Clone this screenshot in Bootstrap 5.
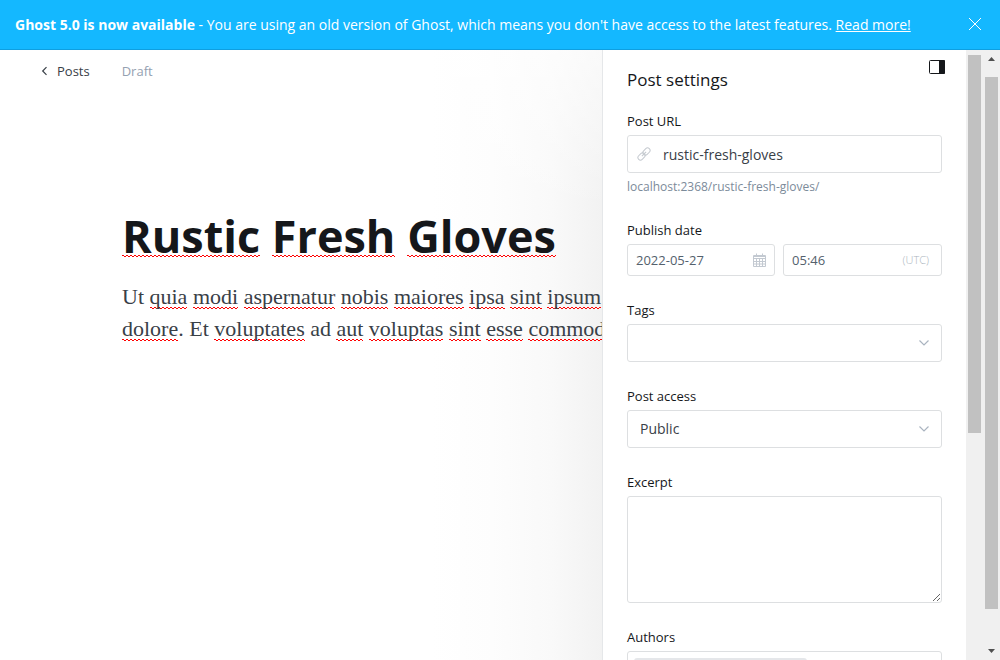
<!DOCTYPE html>
<html lang="en">
<head>
<meta charset="utf-8">
<meta name="viewport" content="width=device-width, initial-scale=1">
<title>Rustic Fresh Gloves</title>
<link href="https://cdn.jsdelivr.net/npm/bootstrap@5.3.0/dist/css/bootstrap.min.css" rel="stylesheet">
<style>
  body { font-family: "Open Sans", "Noto Sans", sans-serif; font-size: 13px; line-height: 20px; color: #15171a; }
  .notice { background: #14b8ff; border-bottom: 1px solid #0f9fe0; padding: 15px 16px 14px 15px; font-size: 14px; }
  .notice a, .notice button { color: #fff; }
  .editor { background: linear-gradient(to bottom, rgba(255,255,255,.6), rgba(255,255,255,0) 160px), linear-gradient(to left, #f2f2f2 0, #f9f9f9 50px, #fdfdfd 110px, #fff 170px); min-width: 0; }
  .topbar { padding: 11px 40px; gap: 32px; }
  .back { color: #394047; font-weight: 500; }
  .draft { color: #95a1b1; }
  .post-body { padding: 116px 0 0 122px; }
  .post-title { font-size: 45px; line-height: 56px; font-weight: 700; margin-bottom: 17px; }
  .post-text { font-family: "Liberation Serif", serif; font-size: 22px; line-height: 32px; color: #394047; }
  .typo { background: url("data:image/svg+xml,%3Csvg xmlns='http://www.w3.org/2000/svg' width='4' height='3'%3E%3Cpath d='M-1 3 1 1 3 3 5 1' fill='none' stroke='%23f00'/%3E%3C/svg%3E") repeat-x left bottom; }
  .post-title .typo { background-position: left 0 bottom 9px; }
  .settings { width: 364px; border-left: 1px solid #e5e7e9; padding: 7px 24px 0; }
  .settings h2 { font-size: 17px; line-height: 24px; font-weight: 500; margin: 11px 0 0; }
  .panel-head { margin: 0 -5px 19px 0; }
  .field { margin-bottom: 24px; }
  .field label, .field-name { display: block; font-size: 13px; line-height: 20px; font-weight: 500; margin-bottom: 4px; }
  .form-control, .form-select { border-color: #dddfe1; border-radius: 3px; font-size: 14px; line-height: 20px; color: #394047; padding: 8px 12px; height: 38px; box-shadow: none; }
  .form-select { background-image: url("data:image/svg+xml,%3Csvg xmlns='http://www.w3.org/2000/svg' viewBox='0 0 12 12'%3E%3Cpath d='M1.5 3.5 6 8l4.500-4.500' fill='none' stroke='%23aab4c0' stroke-width='1.200'/%3E%3C/svg%3E"); background-size: 12px 12px; background-position: right 11px center; }
  .form-control.slug { padding-left: 35px; }
  .date-box { width: 47%; }
  .form-control.when { font-size: 13px; height: 32px; padding: 5px 8px; color: #54616d; }
  .over { position: absolute; top: 0; bottom: 0; display: flex; align-items: center; pointer-events: none; color: #abb4be; }
  .over-start { left: 10px; }
  .over-end { right: 8px; }
  .zone { right: 13px; font-size: 11px; font-weight: 300; }
  textarea.form-control { height: 107px; }
  .hint { font-size: 12px; line-height: 18px; margin-top: 5px; color: #7c8b9a; }
  .authors { padding: 6px; }
  .author { background: #e5e7ea; border-radius: 3px; width: 173px; height: 24px; }
  .track { width: 17px; background: #f0f0f0; padding: 0 2px; }
  .thumb { background: #c1c1c1; }
  .track-inner .thumb { margin-top: 5px; height: 62%; }
  .track svg { display: block; width: 13px; flex: none; }
</style>
</head>
<body class="d-flex flex-column vh-100 overflow-hidden">
<header class="notice d-flex align-items-center justify-content-between text-white">
  <div><b>Ghost 5.0 is now available</b> - You are using an old version of Ghost, which means you don't have access to the latest features. <a href="#">Read more!</a></div>
  <button class="btn p-0 border-0 lh-1" type="button" aria-label="Close"><svg class="d-block" width="18" height="18" viewBox="0 0 18 18" fill="none" stroke="#fff"><path d="m3 2 12 12M15 2 3 14"/></svg></button>
</header>
<main class="d-flex flex-fill overflow-hidden">
  <section class="editor flex-fill overflow-hidden">
    <nav class="topbar d-flex">
      <a class="back d-flex align-items-center text-decoration-none" href="#"><svg class="me-2" width="9" height="10" viewBox="0 0 9 10" fill="none" stroke="#394047" stroke-width="1.200"><path d="M6.500 1.200 2.700 5l3.800 3.800"/></svg>Posts</a>
      <span class="draft">Draft</span>
    </nav>
    <article class="post-body text-nowrap">
      <h1 class="post-title"><span class="typo">Rustic</span> <span class="typo">Fresh</span> <span class="typo">Gloves</span></h1>
      <p class="post-text">Ut <span class="typo">quia</span> <span class="typo">modi</span> <span class="typo">aspernatur</span> <span class="typo">nobis</span> <span class="typo">maiores</span> <span class="typo">ipsa</span> <span class="typo">sint</span> <span class="typo">ipsum</span><br>
      <span class="typo">dolore</span>. Et <span class="typo">voluptates</span> ad <span class="typo">aut</span> <span class="typo">voluptas</span> <span class="typo">sint</span> <span class="typo">esse</span> <span class="typo">commodi</span></p>
    </article>
  </section>
  <aside class="settings bg-white flex-shrink-0 overflow-hidden">
    <div class="panel-head d-flex justify-content-between align-items-start">
      <h2>Post settings</h2>
      <button class="btn p-0 border-0 lh-1" type="button" aria-label="Hide settings"><svg class="d-block" width="20" height="20" viewBox="0 0 20 20"><rect x="2.500" y="3.500" width="15" height="13" rx="1" fill="none" stroke="#15171a"/><path d="M12 3h5q1 0 1 1v12q0 1-1 1h-5z" fill="#15171a"/></svg></button>
    </div>
    <form>
      <div class="field">
        <label for="url">Post URL</label>
        <div class="position-relative">
          <input class="form-control slug" id="url" value="rustic-fresh-gloves" spellcheck="false">
          <span class="over over-start"><svg width="14" height="14" viewBox="0 0 14 14" fill="none" stroke="#c4c9cf"><g transform="rotate(-45 7 7)"><rect x="-.5" y="4.500" width="8" height="5" rx="2.500"/><rect x="6.500" y="4.500" width="8" height="5" rx="2.500"/><path d="M4 7h6"/></g></svg></span>
        </div>
        <div class="hint">localhost:2368/rustic-fresh-gloves/</div>
      </div>
      <div class="field">
        <label for="date">Publish date</label>
        <div class="d-flex gap-2">
          <div class="date-box position-relative flex-shrink-0">
            <input class="form-control when" id="date" value="2022-05-27">
            <span class="over over-end"><svg width="15" height="15" viewBox="0 0 15 15" fill="none" stroke="#c3c9d1"><path d="M1.500 2.500h12v11h-12zM1.500 5.500h12M1.500 8.500h12M1.500 11h12M4.500 5.500v8M7.500 5.500v8M10.500 5.500v8M4.500.5v3M10.500.5v3M1.500 3.500h12"/></svg></span>
          </div>
          <div class="position-relative flex-fill">
            <input class="form-control when" aria-label="Publish time" value="05:46">
            <span class="over zone">(UTC)</span>
          </div>
        </div>
      </div>
      <div class="field">
        <label for="tags">Tags</label>
        <select class="form-select" id="tags"><option></option></select>
      </div>
      <div class="field">
        <label for="access">Post access</label>
        <select class="form-select" id="access"><option>Public</option></select>
      </div>
      <div class="field">
        <label for="excerpt">Excerpt</label>
        <textarea class="form-control d-block" id="excerpt"></textarea>
      </div>
      <div class="field">
        <div class="field-name">Authors</div>
        <div class="form-control authors"><div class="author"></div></div>
      </div>
    </form>
  </aside>
  <div class="track track-inner flex-shrink-0"><div class="thumb"></div></div>
  <div class="track flex-shrink-0 d-flex flex-column">
    <svg height="27" viewBox="0 0 13 27"><path d="M3 11h7L6.500 7z" fill="#505050"/></svg>
    <div class="thumb flex-fill"></div>
    <svg height="51" viewBox="0 0 13 51"><path d="M3 40h7l-3.500 4z" fill="#505050"/></svg>
  </div>
</main>
<script src="https://cdn.jsdelivr.net/npm/bootstrap@5.3.0/dist/js/bootstrap.bundle.min.js"></script>
</body>
</html>
